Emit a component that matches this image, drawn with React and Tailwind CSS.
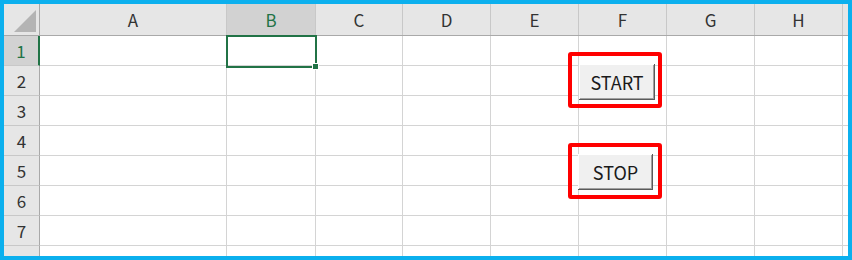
import React from 'react'

const cols = [
  { name: 'A', w: 'w-[187px]' },
  { name: 'B', w: 'w-[89px]', active: true },
  { name: 'C', w: 'w-[87px]' },
  { name: 'D', w: 'w-[88px]' },
  { name: 'E', w: 'w-[88px]' },
  { name: 'F', w: 'w-[88px]' },
  { name: 'G', w: 'w-[88px]' },
  { name: 'H', w: 'w-[88px]' },
]

const rows = [1, 2, 3, 4, 5, 6, 7, 8]

const font = { fontFamily: '"Noto Sans CJK JP", "Liberation Sans", sans-serif' }

const MacroButton = ({ label, box, btn }) => (
  <>
    <div className={`absolute ${box} w-[94px] h-[56px] border-4 border-[#ff0000] rounded-[3px]`} />
    <div
      className={`absolute ${btn} h-[36px] bg-[#f0f0f0] flex items-center justify-center text-[18px] leading-none text-[#1a1a1a] shadow-[inset_-1px_-1px_#5a5a5a,inset_1px_1px_#ffffff,inset_-2px_-2px_#a0a0a0]`}
    >
      {label}
    </div>
  </>
)

export default function App() {
  return (
    <div className="w-[852px] h-[260px] border-4 border-[#0cb0ee] bg-white" style={font}>
      <div className="relative w-full h-full overflow-hidden">
        {/* column headers */}
        <div className="flex h-[32px] bg-[#e6e6e6] border-b border-[#a9a9a9]">
          <div className="w-[36px] h-full border-r border-[#a9a9a9] flex items-end justify-end pr-[3px] pb-[3px]">
            <svg width="22" height="22" viewBox="0 0 22 22">
              <polygon points="22,0 22,22 0,22" fill="#b4b4b4" />
            </svg>
          </div>
          {cols.map((c) => (
            <div
              key={c.name}
              className={`${c.w} h-full flex items-center justify-center text-[17px] leading-none border-r border-[#c8c8c8] ${
                c.active ? 'bg-[#d2d2d2] text-[#217346]' : 'text-[#333]'
              }`}
            >
              {c.name}
            </div>
          ))}
          <div className="flex-1" />
        </div>

        {/* rows */}
        {rows.map((r) => (
          <div key={r} className="flex h-[30px]">
            <div
              className={`w-[36px] h-full flex items-center justify-center text-[17px] leading-none border-b border-[#c8c8c8] ${
                r === 1
                  ? 'bg-[#d2d2d2] text-[#217346] border-r-2 border-r-[#217346]'
                  : 'bg-[#e6e6e6] text-[#333] border-r border-r-[#a9a9a9]'
              }`}
            >
              {r}
            </div>
            {cols.map((c) => (
              <div key={c.name} className={`${c.w} h-full border-r border-b border-[#d4d4d4]`} />
            ))}
            <div className="flex-1 border-b border-[#d4d4d4]" />
          </div>
        ))}

        {/* active cell B1 */}
        <div className="absolute left-[222px] top-[31px] w-[91px] h-[33px] border-2 border-[#217346]" />
        <div className="absolute left-[309px] top-[60px] w-[5px] h-[5px] bg-[#217346] outline outline-1 outline-white" />

        <MacroButton label="START" box="left-[564px] top-[48px]" btn="left-[575px] top-[60px] w-[76px]" />
        <MacroButton label="STOP" box="left-[564px] top-[139px]" btn="left-[574px] top-[150px] w-[75px]" />
      </div>
    </div>
  )
}
